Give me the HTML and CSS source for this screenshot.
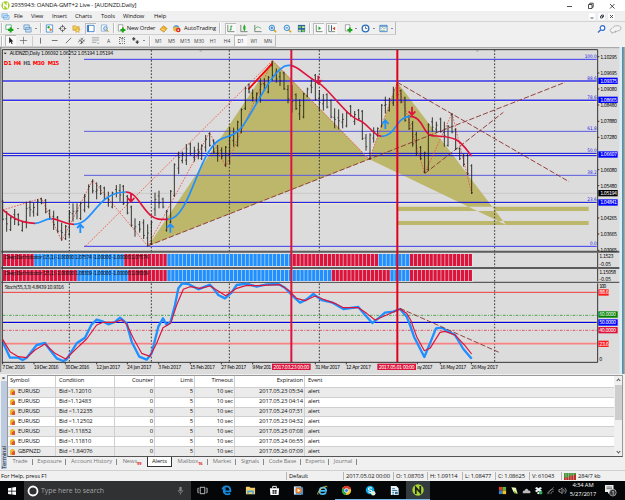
FILE: index.html
```
<!DOCTYPE html>
<html lang="en">

<head>
  <meta charset="UTF-8">
  <meta name="viewport" content="width=device-width, initial-scale=1.0">
  <title>2935943: OANDA-GMT+2 Live - [AUDNZD,Daily]</title>
  <link rel="stylesheet" href="styles.css">
</head>

<body>
  <div class="titlebar">
    <svg class="logo" viewBox="0 0 10 10"><circle cx="5" cy="5" r="4.6" fill="#a5cf2c"/><path d="M3 8V3l4 4V2" fill="none" stroke="#fff" stroke-width="1.5"/></svg>
    <span class="title">2935943: OANDA-GMT+2 Live - [AUDNZD,Daily]</span>
    <svg class="window-buttons" viewBox="0 0 54 10" fill="none" stroke="#222" stroke-width=".8"><path d="M4 5.5h5M25.500 3.500h3.500v4h-3.500zM26.800 3.500v-1.300h3.400v4h-1.200M47 3l4.500 4.500M51.500 3l-4.500 4.500"/></svg>
  </div>

  <div class="menubar">
    <svg class="logo" viewBox="0 0 10 10"><path d="M1 2h6v4H1zM3 4h6v4H3z" fill="#d9ecfb" stroke="#69a9dc" stroke-width=".8"/></svg>
    <span class="m-file">File</span>
    <span class="m-view">View</span>
    <span class="m-insert">Insert</span>
    <span class="m-charts">Charts</span>
    <span class="m-tools">Tools</span>
    <span class="m-window">Window</span>
    <span class="m-help">Help</span>
    <svg class="child-buttons" viewBox="0 0 28 9"><path d="M.3.8h7.4v7.4H.3zM10 .8h7.4v7.4H10zM19.6.8H27v7.4h-7.4z" fill="#fff" stroke="#ddd" stroke-width=".4"/><path d="M2.5 6h3M12.5 4h2v2h-2zM13.5 4V3h2v2h-1M22 3l3 3M25 3l-3 3" fill="none" stroke="#345" stroke-width=".9"/></svg>
  </div>

  <div class="toolbar">
    <div class="tools main-tools">
      <i class="grip"></i>
      <svg viewBox="0 0 10 10"><path d="M1 1h6v5H1z" fill="#fff" stroke="#6a8" /><path d="M6.3 3.5v6M3.3 6.5h6" stroke="#1ba51b" stroke-width="2.3"/></svg>
      <b class="drop"></b>
      <svg viewBox="0 0 10 10"><path d="M1 1h6v5H1zM3 4h6v5H3z" fill="#cfe2f3" stroke="#5b8fc0" stroke-width=".8"/></svg>
      <b class="drop"></b>
      <i class="grip"></i>
      <svg viewBox="0 0 10 10"><path d="M1.5 1h7v8h-7z" fill="#fff" stroke="#4f93d2"/><circle cx="4" cy="3.6" r="1.3" fill="#27a536"/><circle cx="6.3" cy="6.4" r="1.3" fill="#e3772e"/></svg>
      <svg viewBox="0 0 10 10"><circle cx="5" cy="5" r="2.6" fill="none" stroke="#555" stroke-width=".8"/><path d="M5 .8v3M5 6.2v3M.8 5h3M6.2 5h3" stroke="#444" stroke-width=".8"/></svg>
      <svg viewBox="0 0 10 10"><path d="M1 2h3l1 1h3v4H1z" fill="#f6cf55" stroke="#bb8d20" stroke-width=".6"/><path d="M6 4l1 1.8 2 .2-1.4 1.4.3 2L6 8.400 4.200 9.400l.3-2L3 6l2-.2z" fill="#f7dc62" stroke="#b88517" stroke-width=".5"/></svg>
      <svg class="pressed" viewBox="0 0 10 10"><path d="M1.5 1.5H9v7H1.5z" fill="#fff" stroke="#2d76c4" stroke-width=".9"/><path d="M1.5 1.5h1.8v7H1.5z" fill="#2d76c4"/></svg>
      <svg viewBox="0 0 10 10"><path d="M1.5 1h6v7h-6z" fill="#f4f9ff" stroke="#7ca6cc" stroke-width=".8"/><circle cx="6" cy="5" r="2" fill="#cde4f6" stroke="#3f7db8" stroke-width=".8"/><path d="M7.5 6.5l2 2.5" stroke="#c90" stroke-width="1.1"/></svg>
      <i class="grip"></i>
      <svg viewBox="0 0 10 10"><path d="M1.5 .8h5v7h-5z" fill="#fff" stroke="#888" stroke-width=".8"/><path d="M6.5 4v5.5M3.8 6.7h5.5" stroke="#1ba51b" stroke-width="2.2"/></svg>
      <span>New Order</span>
      <svg viewBox="0 0 10 10"><path d="M1 6l4-4 4 3-3.5 4z" fill="#eeb52d" stroke="#a86e09" stroke-width=".6"/><path d="M2.5 6l4 1" stroke="#fff0a4" stroke-width=".8"/></svg>
      <svg viewBox="0 0 10 10"><path d="M.8 4.5C2 0 7 0 8.5 4z" fill="#559ed8"/><circle cx="4" cy="5.5" r="2.8" fill="#e9b54a"/><circle cx="7" cy="6.8" r="2.5" fill="#d9261c"/><path d="M6.2 6h1.600v1.600H6.200z" fill="#fff"/></svg>
      <span>AutoTrading</span>
      <i class="grip"></i>
      <svg class="pressed" viewBox="0 0 10 10"><path d="M2 1v7.5h7.5" class="axis"/><path d="M5.5 2v5M5.5 2.5H7M4 6.5h1.5" stroke="#169b22" fill="none"/></svg>
      <svg viewBox="0 0 10 10"><path d="M2 1v7.5h7.5" class="axis"/><path d="M6 .8v7" stroke="#169b22"/><path d="M4.8 2.3h2.4v4H4.800z" fill="#23ae30"/></svg>
      <svg viewBox="0 0 10 10"><path d="M2 1v7.5h7.5" class="axis"/><path d="M2 6c2-4 4-3 7-1" fill="none" stroke="#3aa245" stroke-width=".8"/></svg>
      <svg viewBox="0 0 10 10"><path d="M6.2 6.2L9 9.2" stroke="#d5a017" stroke-width="1.7"/><circle cx="4.3" cy="4.3" r="3" fill="#dcefff" stroke="#2e83ca"/><path d="M2.8 4.3h3M4.3 2.8v3" stroke="#2269a7" stroke-width=".9"/></svg>
      <svg viewBox="0 0 10 10"><path d="M6.2 6.2L9 9.2" stroke="#d5a017" stroke-width="1.7"/><circle cx="4.3" cy="4.3" r="3" fill="#dcefff" stroke="#2e83ca"/><path d="M2.8 4.3h3" stroke="#2269a7" stroke-width=".9"/></svg>
      <svg viewBox="0 0 10 10"><path d="M1 1h8v8H1z" fill="#2d63a6"/><path d="M1.5 2.5h3v2h-3zM5.5 6.5h3v2h-3z" fill="#6fd04b"/><path d="M5.5 2.5h3v2h-3zM1.5 6.5h3v2h-3z" fill="#c7e7a0"/></svg>
      <i class="grip"></i>
      <svg class="pressed" viewBox="0 0 10 10"><path d="M2.5 1v7.5h7" class="axis"/><path d="M5 2.8l3 2-3 2z" fill="#15a021"/></svg>
      <svg class="pressed" viewBox="0 0 10 10"><path d="M2 1v7.5h7" class="axis"/><path d="M5 1.5v6" stroke="#17538c"/><path d="M9 3L6 5l3 2z" fill="#d04725"/></svg>
      <svg class="to-right" viewBox="0 0 10 10"><path d="M1.5 .8h5v7h-5z" fill="#fff" stroke="#888" stroke-width=".8"/><path d="M6.5 4v5.5M3.8 6.7h5.5" stroke="#1ba51b" stroke-width="2.2"/></svg>
      <b class="drop"></b>
      <svg viewBox="0 0 10 10"><circle cx="5" cy="5" r="3.7" fill="#f2f8ff" stroke="#2a70bd" stroke-width="1.5"/><path d="M5 2.5V5h2" fill="none" stroke="#333" stroke-width=".7"/></svg>
      <b class="drop"></b>
      <svg viewBox="0 0 10 10"><path d="M1 1.5h8v7H1z" fill="#fff" stroke="#3f85c7"/><path d="M1 2.5h8" stroke="#3f85c7"/><path d="M2 5l2-1 1.5 1L8 4M2 7h5" fill="none" stroke="#598b5b" stroke-width=".7"/></svg>
      <b class="drop"></b>
    </div>
    <svg class="search-chat" viewBox="0 0 26 10"><circle cx="5.5" cy="4" r="2.3" fill="#fff" stroke="#316ccb" stroke-width="1.2"/><path d="M3.600 6L1 8.600" stroke="#316ccb" stroke-width="1.4"/><path d="M16 4c0-3 8-3 8 0s-4 3-4 3l-1.5 1v-1.300M15 4.500c-3 1-2 3.500 0 3.500v1.300l2-1.300h2" fill="#f4f4f4" stroke="#999" stroke-width=".7"/></svg>
  </div>

  <div class="toolbar second">
    <div class="tools line-tools">
      <i class="grip"></i>
      <svg class="pressed" viewBox="0 0 10 10"><path d="M3.5 1v7l1.600-1.500 1.100 2.500 1.200-.5-1.200-2.500h2z" fill="#222"/></svg>
      <svg viewBox="0 0 10 10"><path d="M5 1v8M1 5h8" stroke="#555" stroke-width=".7"/></svg>
      <i class="sep"></i>
      <svg viewBox="0 0 10 10"><path d="M5 2v6.5" stroke="#444" stroke-width=".8"/></svg>
      <svg viewBox="0 0 10 10"><path d="M2 5h6.5" stroke="#444" stroke-width=".8"/></svg>
      <svg viewBox="0 0 10 10"><path d="M2 8l6-6" stroke="#444" stroke-width=".8"/></svg>
      <svg viewBox="0 0 10 10"><path d="M1 7l6-5M3 9l6-5M2 4l5 4M4 2l4 4M5 9V5" stroke="#444" stroke-width=".7"/></svg>
      <svg viewBox="0 0 10 10"><path d="M1 2h8M1 4.5h8M1 7h5M7 8h2" stroke="#777" stroke-width=".7"/></svg>
      <span>A</span>
      <span class="label-tool">T</span>
      <svg viewBox="0 0 10 10"><path d="M3 1l2.5 2.5H4V5H2V3.5H.8zM7 9L4.500 6.500H6V5h2v1.500h1.200z" fill="#444"/></svg>
      <b class="drop"></b>
      <i class="grip"></i>
      <span>M1</span><span>M5</span><span>M15</span><span>M30</span><span>H1</span><span>H4</span><span class="pressed">D1</span><span>W1</span><span>MN</span>
    </div>
  </div>

  <svg class="chart" viewBox="0 -9 1875 981">
    <rect x="0" y="-9" width="1875" height="981" fill="#dcdcdc"/>
    <path d="M0 -7H1860" stroke="#a0a0a0" stroke-width="3"/>
    <path d="M2 -9V966" stroke="#8c8c8c" stroke-width="4"/>

    <path class="halo" d="M8 94H1790M8 152H1790M8 313H1790M8 458H1790"/>
    <path d="M8 430H1790" stroke="#c0c0c0" stroke-width="2"/>

    <!-- harmonic pattern -->
    <path class="pattern" d="M445 587L818 31L1108 328Z"/>
    <path class="pattern" d="M1108 328L1192 97L1518 524ZM1192 470H1766V483H1192ZM1192 513H1766V525H1192Z"/>

    <!-- period separators -->
    <path class="period" d="M208 0V937M454 0V937M688 0V937M958 0V937M1484 0V937"/>

    <!-- fibo levels -->
    <path d="M252 28H1790M252 589H1790" stroke="#3a3af0" stroke-width="3"/>
    <path d="M252 244H1790M252 376H1790" stroke="#5a5ae0" stroke-width="3"/>
    <path d="M8 93H1790M8 151H1790" stroke="#3232f0" stroke-width="4.500"/>
    <path d="M8 310H1790M8 317H1790M8 457H1790" stroke="#0000e6" stroke-width="3"/>

    <!-- zigzag and trend lines -->
    <path class="zigzag" d="M8 480L124 445L185 572L278 390L443 588L629 247L677 350L817 32L1108 328L1192 97L1274 370L1356 190L1415 430M257 588L817 32"/>
    <path class="trend" d="M445 587L1695 97M1192 97L1707 395M1275 370L1510 187"/>
    <path d="M745 118L817 40" stroke="#f00" stroke-width="5"/>

    <g id="bars" class="bars"></g>

    <!-- moving average -->
    <g class="ma">
      <path class="down" d="M8 479C25 492 50 519 105 520M155 506C180 508 190 523 222 523M378 426C420 426 430 508 485 508H505M875 47C895 50 920 80 955 98C990 120 1040 200 1080 212C1105 222 1120 258 1145 259M1230 199C1270 200 1270 255 1295 257S1350 258 1370 270S1400 300 1415 318"/>
      <path class="up" d="M105 520C125 519 135 506 155 506M222 523C280 522 290 426 378 426M505 508C560 508 590 350 630 300C665 245 690 275 725 232C760 190 820 45 865 46H875M1145 259C1185 260 1190 199 1230 199"/>
    </g>

    <g class="arrow blue"><path d="M241 549V525M231 534L241 524L251 534"/><path d="M511 548V524M501 533L511 523L521 533"/><path d="M1156 237V212M1146 222L1156 211L1166 222"/></g>
    <g class="arrow red"><path d="M393 430V454M383 444L393 455L403 444"/><path d="M955 77V100M945 90L955 101L965 90"/><path d="M1236 170V194M1226 184L1236 195L1246 184"/></g>

    <!-- deep bar indicators -->
    <path d="M4 605H1860M4 654H1860" stroke="#5c5c5c" stroke-width="6"/>
    <path d="M4 697H1860" stroke="#5c5c5c" stroke-width="4"/>
    <g id="deep"></g>

    <!-- stochastic -->
    <path d="M8 727H1790" stroke="#f23c3c" stroke-width="3"/>
    <path d="M8 796H1790" stroke="#2f9a2f" stroke-width="2.500" stroke-dasharray="8 4 3 4"/>
    <path d="M8 816H1790" stroke="#f2f2cc" stroke-width="9"/>
    <path d="M8 817H1790" stroke="#0000e0" stroke-width="4"/>
    <path d="M8 841H1790" stroke="#e03c50" stroke-width="2.500" stroke-dasharray="8 4 3 4"/>
    <path d="M8 881H1790" stroke="#fa8282" stroke-width="5"/>
    <polyline id="stochMain" fill="none" stroke="#1e90ff" stroke-width="7" stroke-linejoin="round"/>
    <polyline id="stochSignal" fill="none" stroke="#dc143c" stroke-width="3.500" stroke-linejoin="round"/>
    <path class="trend" d="M1200 775L1497 907"/>

    <!-- cursor lines -->
    <path d="M874 0V937" stroke="#dc143c" stroke-width="6"/>
    <path d="M1192 0V937" stroke="#e00020" stroke-width="6"/>

    <path d="M7 940V-1H1793V602M1793 608V651M1793 657V694M1793 700V937H7" fill="none" stroke="#333" stroke-width="3"/>
    <path d="M596 0h12l-6 6zM1426 0h12l-6 6z" fill="#aaa"/>
    <path d="M11 8h9l-4.500 5z" fill="#111"/>

    <text x="29" y="16" textLength="311">AUDNZD,Daily  1.06092 1.06252 1.05194 1.05194</text>
    <g class="frames">
      <text x="11" y="46" textLength="24">D1</text><text x="41" y="46" textLength="23">H4</text><text x="70" y="46" textLength="22" class="off">H1</text><text x="98" y="46" textLength="36">M30</text><text x="143" y="46" textLength="35">M15</text>
    </g>
    <text x="14" y="627" textLength="431">Deep Bar Indicator (15,1) -1.00000 1.07574 -1.00000 -1.00000 1.07574</text>
    <text x="14" y="674" textLength="431">Deep Bar Indicator (25,1) -1.00000 1.08309 -1.00000 -1.00000 1.08309</text>
    <text x="14" y="716" textLength="178">Stoch(55,3,3) 4.8439 10.9316</text>

    <g class="fibo">
      <text x="1790" y="25">100.0</text><text x="1790" y="90">88.6</text><text x="1790" y="147">78.6</text><text x="1790" y="240">61.8</text><text x="1790" y="305">50.0</text><text x="1790" y="371">38.2</text><text x="1790" y="452">23.6</text><text x="1790" y="585">0.0</text>
    </g>
    <g id="scale" class="scale"></g>
    <g id="dates" class="dates"></g>

    <!-- window edge -->
    <rect x="1858" y="-9" width="9" height="981" fill="#d8edf5"/>
    <rect x="1867" y="-9" width="4" height="981" fill="#176a86"/>
    <rect x="1871" y="-9" width="4" height="981" fill="#a9a9a9"/>
  </svg>

  <div class="terminal">
    <div class="side"><span class="close">×</span><span class="name">Terminal</span></div>
    <div class="panel">
      <div class="list">
        <div class="alerts">
          <div class="row head"><span>Symbol</span><span>Condition</span><span>Counter</span><span>Limit</span><span>Timeout</span><span>Expiration</span><span>Event</span></div>
          <div class="row"><span><i class="bell"></i>EURUSD</span><span>Bid&gt;1.12010</span><span>0</span><span>5</span><span>10 sec</span><span>2017.05.23 05:34</span><span>alert</span></div>
          <div class="row"><span><i class="bell"></i>EURUSD</span><span>Bid&gt;1.12483</span><span>0</span><span>5</span><span>10 sec</span><span>2017.05.23 04:14</span><span>alert</span></div>
          <div class="row"><span><i class="bell"></i>EURUSD</span><span>Bid &lt;1.12235</span><span>0</span><span>5</span><span>10 sec</span><span>2017.05.24 07:31</span><span>alert</span></div>
          <div class="row"><span><i class="bell"></i>EURUSD</span><span>Bid &lt;1.12502</span><span>0</span><span>5</span><span>10 sec</span><span>2017.05.23 04:32</span><span>alert</span></div>
          <div class="row"><span><i class="bell"></i>EURUSD</span><span>Bid&gt;1.11852</span><span>0</span><span>5</span><span>10 sec</span><span>2017.05.25 07:08</span><span>alert</span></div>
          <div class="row"><span><i class="bell"></i>EURUSD</span><span>Bid&gt;1.11810</span><span>0</span><span>5</span><span>10 sec</span><span>2017.05.24 06:55</span><span>alert</span></div>
          <div class="row"><span><i class="bell"></i>GBPNZD</span><span>Bid &lt;1.84076</span><span>0</span><span>5</span><span>10 sec</span><span>2017.05.26 07:09</span><span>alert</span></div>
        </div>
        <div class="scrollbar"><i class="up"></i><b></b><i class="down"></i></div>
      </div>
      <div class="tabs">
        <span class="trade">Trade</span><span class="exposure">Exposure</span><span class="history">Account History</span><span class="news">News<sub>99</sub></span><span class="active">Alerts</span><span class="mailbox">Mailbox<sub>16</sub></span><span class="market">Market</span><span class="signals">Signals</span><span class="codebase">Code Base</span><span class="experts">Experts</span><span class="journal">Journal</span>
      </div>
    </div>
  </div>

  <div class="status">
    <span class="help">For Help, press F1</span>
    <span>Default</span>
    <span>2017.05.02 00:00</span>
    <span>O: 1.08703</span>
    <span>H: 1.09114</span>
    <span>L: 1.08477</span>
    <span>C: 1.08625</span>
    <span>V: 61043</span>
    <span class="traffic"><svg viewBox="0 0 12 7"><rect width="12" height="7" fill="#47943c"/><path d="M0 7V5l2-1 2 1 3-3 2 1 3-2v6z" fill="#b7302a"/><path d="M2 0v7M4.5 0v7M7 0v7M9.5 0v7" stroke="#e8e8d8" stroke-width=".4"/></svg>284/7 kb</span>
  </div>

  <div class="taskbar">
    <div class="start"><svg viewBox="0 0 10 10"><path d="M1 2.2l3.5-.5v3H1zM5.200 1.600L9 1v3.700H5.200zM1 5.400h3.500v3L1 7.900zM5.200 5.400H9V9l-3.800-.5z" fill="#fff"/></svg></div>
    <div class="search">
      <svg class="ring" viewBox="0 0 12 12"><circle cx="6" cy="6" r="4.5" fill="none" stroke="#fff" stroke-width="1.8"/></svg>
      <span>Type here to search</span>
      <svg class="mic" viewBox="0 0 10 10"><path d="M3.7 1h2.600v5H3.700z" fill="#888"/><path d="M2.5 4.5c0 4 5 4 5 0M5 7.500V9.500" fill="none" stroke="#888" stroke-width=".8"/></svg>
    </div>
    <div class="apps">
      <div><svg viewBox="0 0 12 12"><path d="M3.5 2.5h5v7h-5zM1.800 3.500H1v5h.8M10.200 3.500h.8v5h-.8" fill="none" stroke="#ddd" stroke-width=".9"/></svg></div>
      <div><svg viewBox="0 0 12 12"><path d="M2.5 7h7.700C10.500 0 3 0 1.500 5M10 9.500C4 12 1 7 5 3.800" fill="none" stroke="#1589e0" stroke-width="2"/></svg></div>
      <div><svg viewBox="0 0 12 12"><path d="M1 2h4l1 1h5v7H1z" fill="#f2cf67"/><path d="M2.5 6h7v4H8V8H4v2H2.500z" fill="#4ea2d8"/></svg></div>
      <div><svg viewBox="0 0 12 12"><path d="M1 3.5h10l-.5 7.500h-9z" fill="#fff"/><path d="M4 3.5V1.500h4v2" fill="none" stroke="#fff"/><path d="M3.800 5.500h2v1.800h-2zM6.300 5.500h2v1.800h-2zM3.800 7.800h2v1.800h-2zM6.300 7.800h2v1.800h-2z" fill="#222"/></svg></div>
      <div><svg viewBox="0 0 12 12"><path d="M1 1.5h8v9H1z" fill="#dfe9f2"/><path d="M3 2.5h8v8H3z" fill="#4e93c9"/><circle cx="6" cy="6" r="3.3" fill="#ef7a22"/><path d="M5 4l3 2-3 2z" fill="#fff"/></svg></div>
      <div><svg viewBox="0 0 12 12"><path d="M3 6.5h7C10 1.500 3 1.500 2.700 6.500S9 10.500 9.700 8" fill="none" stroke="#4cbcf2" stroke-width="1.9"/><path d="M1 10.5C-1 8 9-1 11.300 2" fill="none" stroke="#f2c434"/></svg></div>
      <div class="open"><svg viewBox="0 0 12 12"><circle cx="6" cy="6" r="5" fill="#f3c927"/><path d="M6 6L1.700 3.500C4 0 9 0 10.700 4z" fill="#db3b2b"/><path d="M1.700 3.500L6 6 5.500 11C1 10.500 0 6 1.700 3.500" fill="#30a04c"/><circle cx="6" cy="6" r="2.2" fill="#4285dc" stroke="#fff" stroke-width=".8"/></svg></div>
      <div class="open"><svg viewBox="0 0 12 12"><circle cx="5.5" cy="5.5" r="4.7" fill="#0aa8e6"/><path d="M7.5 3.5C5 2 3 4 4 5s4 .5 3.300 2.200S4 8 3.600 7" fill="none" stroke="#fff" stroke-width="1.1"/><circle cx="9" cy="9" r="2.5" fill="#dff2da"/></svg></div>
      <div class="open"><svg viewBox="0 0 12 12"><path d="M2 1h6l2.5 2.5V11H2z" fill="#e9f3f8"/><path d="M3.5 4h3M3.5 6H9M3.5 8h2M3.5 10h2" stroke="#246b93"/><path d="M6.5 7.5h3V10h-3z" fill="#246b93"/></svg></div>
      <div class="open current"><svg viewBox="0 0 12 12"><circle cx="6" cy="6" r="5.7" fill="#a8d52e"/><path d="M3.800 10V3.500l4.500 5V2" fill="none" stroke="#1c1e1b" stroke-width="1.7"/></svg></div>
    </div>
    <div class="tray">
      <svg viewBox="0 0 10 10"><path d="M1 1h4v4H1z" fill="#d84027"/><path d="M5 1h4v4H5z" fill="#62ae36"/><path d="M1 5h4v4H1z" fill="#317fc7"/><path d="M5 5h4v4H5z" fill="#f1bf28"/></svg>
      <svg viewBox="0 0 10 10"><path d="M1.5 1.5l5 .5 2 6.500L4 7z" fill="#e9f5b9"/><path d="M4.5 5l4 3.500-4-.5z" fill="#8cba33"/></svg>
      <svg viewBox="0 0 10 10"><path d="M1 8c-1-3 2-3 2-3 1-3 4-2 4 0 3 0 3 3 1.500 3z" fill="#bbb"/></svg>
      <svg viewBox="0 0 10 10"><path d="M1 2.5L3 1l2 1.500L7 1l2 1.500L7 4l2 1.500-2 1.500-2-1.500L3 7 1 5.500 3 4zM3 8l2-1.500L7 8 5 9.300z" fill="#e8f0f0"/><circle cx="7.5" cy="7.5" r="2" fill="#32a953"/></svg>
      <svg viewBox="0 0 10 10" fill="none" stroke="#999" stroke-width=".8"><path d="M1 8.5L8.500 1.500M3 9c0-4 2-5 5.500-5M5.500 9c0-2 1-3 3-3"/></svg>
      <svg viewBox="0 0 10 10"><path d="M1 4h1.500L4.500 2v6.500l-2-2H1z" fill="none" stroke="#ddd" stroke-width=".7"/><path d="M6 3.500c1 1 1 2.500 0 3.500M7.500 2c2 2 2 4.500 0 6.500" fill="none" stroke="#ddd" stroke-width=".7"/></svg>
    </div>
    <div class="clock">4:34 AM<br>5/27/2017</div>
    <svg class="notice" viewBox="0 0 13 13"><path d="M1 1h8.500v7H6l-2 2V8H1z" fill="#eee"/><path d="M2.500 3h5.500M2.500 4.700h5.500" stroke="#222" stroke-width=".6"/><circle cx="8.800" cy="8.600" r="3.400" fill="#333" stroke="#ddd" stroke-width=".6"/><text x="7.600" y="10.500" font-size="5.500" fill="#fff">1</text></svg>
  </div>

  <script src="chart.js"></script>
</body>

</html>
```
FILE: styles.css
```
body {
  margin: 0;
  width: 625px;
  height: 500px;
  overflow: hidden;
  display: flex;
  flex-direction: column;
  background: #f0f0f0;
  color: #111;
  font-family: "Open Sans", "Noto Sans", sans-serif;
  font-size: 5.8px;
  letter-spacing: -0.12px;
  line-height: 1;
  white-space: nowrap;
}

svg {
  display: block;
  flex: none;
}

/* title and menu */
.titlebar {
  height: 11px;
  background: #fff;
  display: flex;
  align-items: center;
}

.logo {
  width: 9px;
  height: 9px;
  margin: 0 1px;
}

.title {
  font-size: 5.95px;
}

.window-buttons {
  width: 54px;
  height: 10px;
  margin-left: auto;
  margin-right: 8px;
}

.menubar {
  height: 10px;
  display: flex;
  align-items: center;
  border-bottom: 1px solid #d4d4d4;
}

.menubar .logo {
  margin-right: 4px;
}

.menubar span {
  padding-top: 1px;
}

.m-file {
  width: 17px;
}

.m-view {
  width: 21px;
}

.m-insert {
  width: 23px;
}

.m-charts {
  width: 26px;
}

.m-tools {
  width: 22px;
}

.m-window {
  width: 31px;
}

.child-buttons {
  width: 28px;
  height: 9px;
  margin-left: auto;
  margin-right: 9px;
}

/* toolbars */
.toolbar {
  height: 13px;
  display: flex;
  align-items: center;
}

.toolbar.second {
  height: 12px;
}

.tools {
  display: grid;
  align-items: center;
  justify-items: center;
  height: 100%;
  box-sizing: border-box;
  border-right: 1px solid #bbb;
  border-bottom: 1px solid #cfcfcf;
}

.main-tools {
  grid-template-columns: 4px 11px 6px 12px 6px 4px 13px 13px 14px 14px 14px 5px 10px 30px 14px 13px 34px 6px 14px 13px 15px 15px 14px 14px 4px 13px 13px 15px 6px 12px 6px 12px 6px;
}

.line-tools {
  grid-template-columns: 4px 12px 15px 3px 13px 14px 14px 13px 14px 13px 14px 12px 6px 5px 13px 13px 14px 14px 14px 14px 13px 14px 14px;
  font-size: 5px;
  color: #444;
}

.tools svg {
  width: 9px;
  height: 9px;
}

.tools span {
  padding-top: 2px;
}

.tools .pressed {
  padding: 1px;
  background: #f9f9f9;
  box-shadow: inset 1px 1px 0 #bbb;
}

.tools span.pressed {
  padding: 4px 3px 2px;
}

.to-right {
  justify-self: end;
}

.axis {
  fill: none;
  stroke: #4b6650;
  stroke-width: .8;
}

.grip {
  width: 1px;
  height: 10px;
  background: #fff;
  border-left: 1px solid #bbb;
}

.sep {
  width: 1px;
  height: 10px;
  background: #ccc;
}

.drop {
  border: 1.5px solid transparent;
  border-top-color: #222;
  border-bottom: 0;
}

.tools .label-tool {
  border: 1px dotted #777;
  padding: 0 1px;
}

.search-chat {
  width: 26px;
  height: 10px;
  margin-left: auto;
  margin-right: 2px;
}

/* chart */
.chart {
  width: 625px;
  height: 327px;
  font-family: "DejaVu Sans Condensed", "DejaVu Sans", sans-serif;
  font-size: 16px;
  letter-spacing: 0;
  fill: #111;
}

.pattern {
  fill: #bdb76b;
  fill-rule: evenodd;
}

.period {
  stroke: #3a3a3a;
  stroke-width: 3;
  stroke-dasharray: 5 5;
}

.halo {
  stroke: #ebe9cf;
  stroke-width: 9;
}

.zigzag {
  fill: none;
  stroke: #f04a3c;
  stroke-width: 2.5;
  stroke-dasharray: 5 4;
}

.trend {
  fill: none;
  stroke: #8b3030;
  stroke-width: 2.7;
  stroke-dasharray: 16 6;
}

.bars {
  fill: none;
  stroke: #1b1b12;
  stroke-width: 2.6;
}

.ma path {
  fill: none;
  stroke-width: 5;
}

.ma .up {
  stroke: #1e90ff;
}

.ma .down {
  stroke: #dc143c;
}

.arrow path {
  fill: none;
  stroke-width: 5.5;
}

.arrow.blue {
  stroke: #1e90ff;
}

.arrow.red {
  stroke: #dc143c;
}

.frames {
  font-family: "DejaVu Sans", sans-serif;
  font-weight: bold;
  font-size: 16px;
  fill: #f00;
}

.frames .off {
  fill: #555;
}

.fibo {
  fill: #2424e8;
  text-anchor: end;
  font-size: 14px;
}

.scale .boxed,
.dates .boxed {
  fill: #fff;
}

/* terminal */
.terminal {
  height: 94px;
  margin-top: 1px;
  display: flex;
}

.side {
  width: 7px;
  display: flex;
  flex-direction: column;
  justify-content: space-between;
  align-items: center;
}

.side .close {
  font-size: 6px;
  font-weight: bold;
}

.side .name {
  writing-mode: vertical-rl;
  transform: rotate(180deg);
  flex: 1;
  width: 6px;
  background: #bccbdf;
  line-height: 6px;
}

.panel {
  flex: 1;
  display: flex;
  flex-direction: column;
}

.list {
  height: 82px;
  display: flex;
  border: 1px solid #999;
  border-bottom-color: #555;
  box-sizing: border-box;
  margin-right: 2px;
  background: #fff;
}

.alerts {
  flex: 1;
  display: flex;
  flex-direction: column;
}

.row {
  flex: 1;
  display: grid;
  grid-template-columns: 48px 59px 40px 40px 40px 70px 1fr;
  border-bottom: 1px solid #cfcfcf;
  box-sizing: border-box;
}

.row:last-child {
  border-bottom: 0;
}

.row:nth-child(even) {
  background: #ebebeb;
}

.row.head {
  flex: 1.2;
}

.row span {
  display: flex;
  align-items: center;
  padding: 0 1px 0 3px;
  border-right: 1px solid #d0d0d0;
}

.row span:first-child {
  padding-left: 2px;
}

.row span:nth-child(n+3):nth-child(-n+6) {
  justify-content: flex-end;
}

.row span:last-child {
  border-right: 0;
}

.bell {
  width: 5px;
  height: 6px;
  margin-right: 3px;
  border-radius: 3px 3px 1px 1px;
  background: radial-gradient(circle at 75% 75%, #e2532e 35%, #e9b632 40%);
}

.scrollbar {
  width: 8px;
  background: #f0f0f0;
  display: flex;
  flex-direction: column;
  align-items: center;
}

.scrollbar b {
  width: 7px;
  height: 35px;
  margin: 3px 0 auto;
  background: #cdcdcd;
}

.scrollbar i {
  width: 2px;
  height: 2px;
  border: solid #555;
  border-width: 1px 0 0 1px;
  transform: rotate(45deg);
  margin-top: 3px;
}

.scrollbar .down {
  transform: rotate(225deg);
  margin: 0 0 3px;
}

.tabs {
  height: 10px;
  display: flex;
  align-items: stretch;
  color: #777;
}

.tabs span {
  box-sizing: border-box;
  line-height: 9px;
  text-align: center;
  background: linear-gradient(#888, #888) right 2px / 1px 6px no-repeat;
}

.tabs sub {
  color: #e02020;
  font-size: 4px;
  font-weight: bold;
  vertical-align: -2px;
  line-height: 0;
}

.tabs .trade {
  width: 26px;
}

.tabs .exposure {
  width: 33px;
}

.tabs .history {
  width: 51px;
}

.tabs .news {
  width: 30px;
  background: none;
}

.tabs .active {
  width: 25px;
  background: #fff;
  border: 1px solid #333;
  border-top: 0;
  color: #111;
}

.tabs .mailbox {
  width: 36px;
}

.tabs .market {
  width: 28px;
}

.tabs .signals {
  width: 28px;
}

.tabs .codebase {
  width: 37px;
}

.tabs .experts {
  width: 28px;
}

.tabs .journal {
  width: 28px;
}

/* status line */
.status {
  height: 11px;
  margin-top: 1px;
  display: grid;
  grid-template-columns: 286px 57px 50px 34px 35px 33px 34px 32px 1fr;
  align-items: center;
  border-top: 1px solid #d0d0d0;
  box-sizing: border-box;
}

.status span {
  border-left: 1px solid #b5b5b5;
  padding-left: 2px;
  line-height: 8px;
}

.status .help {
  border: 0;
  padding-left: 1px;
}

.status .traffic {
  display: flex;
  align-items: center;
}

.traffic svg {
  width: 12px;
  height: 7px;
  margin-right: 2px;
}

/* taskbar */
.taskbar {
  flex: 1;
  display: flex;
  align-items: stretch;
  background: #040608;
  color: #fff;
}

.start {
  width: 24px;
  display: flex;
  align-items: center;
  justify-content: center;
}

.start svg {
  width: 10px;
  height: 10px;
}

.search {
  width: 167px;
  display: flex;
  align-items: center;
  background: #303132;
  color: #a5a5a5;
  font-size: 7px;
  letter-spacing: -0.08px;
}

.ring {
  width: 12px;
  height: 12px;
  margin: 0 2px 0 3px;
}

.mic {
  width: 9px;
  height: 9px;
  margin-left: auto;
  margin-right: 6px;
}

.apps {
  display: flex;
}

.apps div {
  width: 23.95px;
  display: flex;
  align-items: center;
  justify-content: center;
  box-sizing: border-box;
  border-bottom: 1px solid transparent;
}

.apps div svg {
  width: 11px;
  height: 11px;
}

.apps .open {
  border-bottom-color: #76b9ed;
}

.apps .current {
  background: #343b3f;
}

.apps .current svg {
  width: 12px;
  height: 12px;
}

.tray {
  margin-left: auto;
  display: flex;
  align-items: center;
  gap: 3px;
}

.tray svg {
  width: 9px;
  height: 9px;
}

.clock {
  width: 32px;
  text-align: center;
  line-height: 8.5px;
}

.notice {
  width: 13px;
  height: 13px;
  margin: 3px 8px 0 5px;
}
```
FILE: chart.js
```
// x, high, low of every daily bar, in chart units
var bars = [
  [8, 450, 512], [20, 483, 545], [32, 500, 543], [44, 477, 525], [55, 490, 527], [67, 513, 545], [79, 455, 535],
  [90, 452, 500], [101, 458, 500], [113, 447, 498], [124, 443, 463], [137, 447, 490], [149, 478, 510], [161, 482, 540],
  [173, 498, 548], [185, 518, 572], [197, 525, 570], [208, 480, 560], [219, 460, 515], [231, 460, 508], [242, 455, 510],
  [254, 432, 487], [266, 403, 475], [278, 388, 430], [290, 397, 448], [302, 405, 435], [313, 410, 450], [325, 425, 470],
  [337, 425, 475], [349, 405, 442], [360, 402, 455], [370, 405, 465], [382, 435, 493], [394, 467, 530], [405, 505, 560],
  [419, 513, 548], [431, 508, 567], [443, 523, 590], [454, 513, 585], [465, 428, 498], [477, 422, 475], [489, 443, 475],
  [500, 480, 545], [512, 420, 520], [523, 340, 440], [536, 305, 372], [547, 305, 340], [559, 282, 345], [571, 278, 315],
  [583, 290, 335], [595, 278, 328], [605, 283, 330], [617, 255, 305], [629, 247, 290], [641, 268, 310], [653, 285, 335],
  [665, 292, 328], [677, 288, 350], [689, 232, 343], [701, 233, 290], [713, 212, 290], [724, 175, 250], [736, 110, 180],
  [747, 100, 130], [758, 118, 155], [770, 127, 160], [781, 85, 158], [793, 85, 120], [805, 78, 130], [817, 32, 92],
  [829, 55, 98], [840, 65, 108], [852, 65, 120], [864, 105, 160], [876, 105, 188], [888, 130, 180], [899, 148, 210],
  [911, 128, 205], [922, 113, 142], [934, 88, 130], [946, 72, 152], [958, 120, 182], [970, 132, 182], [981, 130, 175],
  [993, 148, 205], [1004, 175, 235], [1016, 178, 238], [1028, 190, 235], [1040, 185, 232], [1052, 165, 200],
  [1064, 183, 225], [1076, 177, 210], [1087, 180, 270], [1098, 252, 302], [1110, 250, 330], [1121, 232, 278],
  [1133, 232, 260], [1145, 162, 232], [1156, 140, 190], [1168, 143, 185], [1180, 110, 168], [1192, 100, 138],
  [1203, 118, 160], [1215, 140, 215], [1227, 195, 240], [1238, 213, 290], [1249, 245, 318], [1262, 288, 330],
  [1274, 305, 370], [1285, 220, 362], [1297, 202, 245], [1309, 215, 248], [1322, 203, 248], [1333, 215, 290],
  [1344, 225, 290], [1356, 190, 250], [1367, 235, 300], [1379, 292, 330], [1391, 312, 350], [1403, 312, 375],
  [1415, 343, 432]
];

var stems = '', ticks = '';
for (var i = 0; i < bars.length; i++) {
  var x = bars[i][0], high = bars[i][1], low = bars[i][2];
  var next = bars[i + 1] || [0, low, low];
  var middle = (next[1] + next[2]) / 2;
  var close = Math.max(high + 4, Math.min(low - 4, middle));
  var open = high + low - close;
  stems += 'M' + x + ' ' + high + 'V' + low;
  ticks += 'M' + (x - 4) + ' ' + open + 'h4M' + x + ' ' + close + 'h4';
}
document.getElementById('bars').innerHTML = '<path d="' + stems + '"/><path d="' + ticks + '" opacity=".7"/>';

// colour runs of the two indicator rows: [end x, colour]
var red = '#dc143c';
var blue = '#1e90ff';
var rows = [
  { y: 612, h: 36, runs: [[105, red], [375, blue], [508, red], [881, blue], [1139, red], [1232, blue], [1420, red]] },
  { y: 660, h: 33, runs: [[237, red], [388, blue], [508, red], [998, blue], [1174, red], [1232, blue], [1420, red]] }
];
var deep = '';
rows.forEach(function (row) {
  var run = 0;
  deep += '<rect x="8" y="' + (row.y - 2) + '" width="1412" height="' + (row.h + 4) + '" fill="#e2dfe6"/>';
  for (var x = 9; x < 1415; x += 11.74) {
    if (x + 6 > row.runs[run][0]) run++;
    deep += '<rect x="' + x + '" y="' + row.y + '" width="9.8" height="' + row.h + '" fill="' + row.runs[run][1] + '"/>';
  }
});
document.getElementById('deep').innerHTML = deep;

var main = [
  [8, 290], [30, 338], [55, 338], [68, 345], [80, 338], [110, 300], [135, 294], [150, 315], [170, 340], [190, 348],
  [200, 343], [230, 295], [255, 278], [275, 238], [290, 224], [310, 230], [325, 238], [345, 231], [360, 218], [380, 235],
  [395, 290], [418, 335], [440, 344], [455, 325], [475, 245], [489, 220], [500, 240], [512, 230], [525, 180], [535, 130],
  [547, 115], [565, 117], [595, 133], [615, 125], [630, 119], [640, 130], [655, 150], [675, 160], [695, 142], [710, 120],
  [740, 116], [770, 125], [800, 118], [835, 117], [855, 128], [875, 150], [900, 173], [920, 163], [940, 147], [965, 165],
  [995, 172], [1030, 192], [1075, 186], [1100, 215], [1117, 234], [1135, 220], [1155, 203], [1180, 200], [1200, 192],
  [1220, 215], [1230, 240], [1242, 275], [1273, 336], [1290, 295], [1308, 250], [1325, 248], [1365, 270], [1390, 312],
  [1415, 341]
];
var signal = [
  [8, 283], [30, 320], [55, 335], [80, 338], [105, 315], [135, 297], [165, 325], [197, 342], [230, 310], [260, 282],
  [290, 240], [310, 232], [345, 232], [365, 224], [380, 238], [400, 280], [425, 325], [450, 334], [470, 295], [489, 248],
  [512, 235], [530, 180], [550, 133], [570, 125], [600, 130], [630, 123], [650, 135], [677, 152], [710, 130], [740, 121],
  [775, 122], [840, 119], [865, 135], [890, 160], [915, 167], [945, 153], [970, 163], [1005, 175], [1030, 188],
  [1075, 188], [1100, 205], [1125, 225], [1160, 210], [1200, 192], [1220, 205], [1232, 225], [1250, 275], [1273, 317],
  [1290, 310], [1320, 262], [1335, 259], [1365, 270], [1395, 302], [1415, 327]
];

function points(list) {
  return list.map(function (p) { return p[0] + ',' + (p[1] + 585); }).join(' ');
}
document.getElementById('stochMain').setAttribute('points', points(main));
document.getElementById('stochSignal').setAttribute('points', points(signal));

// price scale: [y, label, box colour]
var labels = [
  [20, '1.10295'], [69, '1.09695'], [117, '1.09080'], [165, '1.08480'], [214, '1.07880'], [262, '1.07280'],
  [359, '1.06080'], [407, '1.05480'], [504, '1.04265'], [552, '1.03665'], [601, '1.03065'],
  [92, '1.09375', '#00f'], [149, '1.08665', '#00f'], [313, '1.06607', '#00f'], [429, '1.05194', '#000'],
  [457, '1.04841', '#00f'], [617, '1.1523'], [642, '-0.05'], [665, '1.15058'], [687, '-0.05'], [709, '100'],
  [727, '88.6', '#ff1e1e'], [793, '60.0000', '#008000'], [817, '50.0000', '#00f'], [840, '40.0000', '#dc143c'],
  [881, '23.6', '#ff1e1e'], [927, '0']
];
var scale = '';
labels.forEach(function (item) {
  var y = item[0], text = item[1], box = item[2];
  var length = text.length * 7.3 - 1;
  if (box) {
    scale += '<rect x="1795" y="' + (y - 9) + '" width="' + (text.length > 4 ? 58 : 31) + '" height="19" fill="' + box + '"/>';
  } else if (y < 605) {
    scale += '<path d="M1793 ' + y + 'h5" stroke="#333" stroke-width="3"/>';
  }
  scale += '<text class="' + (box ? 'boxed' : '') + '" x="' + (y > 605 ? 1798 : 1801) + '" y="' + (y + 6) + '" textLength="' + length + '">' + text + '</text>';
});
document.getElementById('scale').innerHTML = scale;

// time scale: [x, width, label, boxed]
var days = [
  [7, 68, '7 Dec 2016'], [101, 75, '19 Dec 2016'], [195, 73, '30 Dec 2016'], [289, 72, '12 Jan 2017'],
  [381, 74, '24 Jan 2017'], [475, 69, '3 Feb 2017'], [570, 75, '15 Feb 2017'], [663, 76, '27 Feb 2017'],
  [757, 57, '9 Mar 201'], [945, 75, '31 Mar 2017'], [1038, 75, '12 Apr 2017'], [1251, 47, 'ay 2017'],
  [1320, 79, '16 May 2017'], [1413, 81, '26 May 2017'],
  [820, 108, '2017.03.23 00:00', 1], [1136, 108, '2017.05.01 00:00', 1]
];
var dates = '';
days.forEach(function (d) {
  if (d[3]) {
    dates += '<rect x="' + (d[0] - 4) + '" y="941" width="116" height="19" fill="#dc143c"/>';
  } else {
    dates += '<path d="M' + (d[0] + 1) + ' 937v6" stroke="#333" stroke-width="3"/>';
  }
  dates += '<text class="' + (d[3] ? 'boxed' : '') + '" x="' + d[0] + '" y="956" textLength="' + d[1] + '">' + d[2] + '</text>';
});
document.getElementById('dates').innerHTML = dates;
```
